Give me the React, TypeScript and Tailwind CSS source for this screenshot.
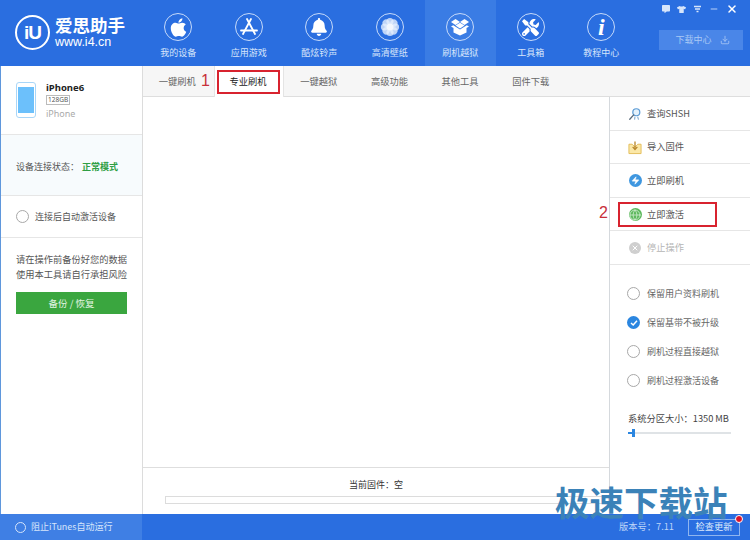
import { FaApple, FaBell, FaTools, FaTshirt, FaCommentAlt } from 'react-icons/fa';
import { FiDownload, FiMinus, FiX } from 'react-icons/fi';
import { Zap, Globe, X } from 'lucide-react';
import type { ReactNode } from 'react';

function Flower() {
  const petals = [0, 45, 90, 135, 180, 225, 270, 315];
  return (
    <svg width="22" height="22" viewBox="0 0 22 22">
      {petals.map((a) => (
        <circle key={a} cx="11" cy="5.5" r="3.6" fill="#e3edfc" opacity="0.8" transform={`rotate(${a} 11 11)`} />
      ))}
      <circle cx="11" cy="11" r="3.5" fill="#f4f8fe" />
    </svg>
  );
}

function AppStoreA() {
  return (
    <svg width="22" height="22" viewBox="0 0 22 22" fill="none" stroke="#fff" strokeWidth="1.8" strokeLinecap="round">
      <path d="M13 3 L5 18" />
      <path d="M9 3 L17 18" />
      <path d="M3 14.5 H19" />
    </svg>
  );
}

function OpenBox() {
  return (
    <svg width="20" height="20" viewBox="0 0 20 20" fill="#fff">
      <path d="M5.5 2 L10 5 L5.5 8 L1 5 Z" />
      <path d="M14.5 2 L19 5 L14.5 8 L10 5 Z" />
      <path d="M5.5 8.6 L10 5.8 L14.5 8.6 L10 11.4 Z" />
      <path d="M1 9.5 L3.2 8.2 L10 12.6 L16.8 8.2 L19 9.5 L16.5 11 V15.5 L10 18.5 L3.5 15.5 V11 Z" />
    </svg>
  );
}

function SearchBadge() {
  return (
    <svg width="16" height="16" viewBox="0 0 16 16" fill="none">
      <circle cx="9.5" cy="6" r="4" fill="#e4f1fb" stroke="#5b9bd5" strokeWidth="1.4" />
      <path d="M6.5 9 L2 14" stroke="#5a6b7c" strokeWidth="1.5" strokeLinecap="round" />
      <path d="M8 11 L7.5 14.5 M11 11 L12 14.5" stroke="#7fa8cf" strokeWidth="1.2" />
    </svg>
  );
}

function ImportBox() {
  return (
    <svg width="15" height="15" viewBox="0 0 15 15" fill="none">
      <path d="M1 4 H4.5 L7.5 7 L10.5 4 H14 V14 H1 Z" fill="#fbe8a8" stroke="#e3bb57" strokeWidth="1" />
      <path d="M7.5 1 V9" stroke="#b8862a" strokeWidth="1.4" />
      <path d="M5 6.8 L7.5 9.6 L10 6.8" stroke="#b8862a" strokeWidth="1.4" />
    </svg>
  );
}

const navItems: { label: string; icon: ReactNode; active?: boolean }[] = [
  { label: '我的设备', icon: <FaApple className="text-[21px] text-white" /> },
  { label: '应用游戏', icon: <AppStoreA /> },
  { label: '酷炫铃声', icon: <FaBell className="text-[18px] text-white" /> },
  { label: '高清壁纸', icon: <Flower /> },
  { label: '刷机越狱', icon: <OpenBox />, active: true },
  { label: '工具箱', icon: <FaTools className="text-[17px] text-white" /> },
  {
    label: '教程中心',
    icon: <span className="font-['Liberation_Serif',serif] text-[24px] font-bold italic leading-none text-white">i</span>,
  },
];

const tabs = ['一键刷机', '专业刷机', '一键越狱', '高级功能', '其他工具', '固件下载'];

const actions: { label: string; icon: ReactNode; muted?: boolean }[] = [
  { label: '查询SHSH', icon: <SearchBadge /> },
  { label: '导入固件', icon: <ImportBox /> },
  {
    label: '立即刷机',
    icon: (
      <span className="flex h-[13px] w-[13px] items-center justify-center rounded-full bg-[#3f97e0]">
        <Zap className="h-[9px] w-[9px] fill-white text-white" strokeWidth={1} />
      </span>
    ),
  },
  {
    label: '立即激活',
    icon: (
      <span className="flex h-[13px] w-[13px] items-center justify-center rounded-full bg-[#5cb85c]">
        <Globe className="h-[12px] w-[12px] text-[#d8f0d8]" strokeWidth={1.5} />
      </span>
    ),
  },
  {
    label: '停止操作',
    muted: true,
    icon: (
      <span className="flex h-[12px] w-[12px] items-center justify-center rounded-full bg-[#cfcfcf]">
        <X className="h-[8px] w-[8px] text-white" strokeWidth={3} />
      </span>
    ),
  },
];

const options = [
  { label: '保留用户资料刷机', checked: false },
  { label: '保留基带不被升级', checked: true },
  { label: '刷机过程直接越狱', checked: false },
  { label: '刷机过程激活设备', checked: false },
];

function Radio({ checked }: { checked?: boolean }) {
  if (checked) {
    return (
      <span className="flex h-[13px] w-[13px] shrink-0 items-center justify-center rounded-full bg-[#2b86e0]">
        <svg width="8" height="8" viewBox="0 0 8 8" fill="none" stroke="#fff" strokeWidth="1.5">
          <path d="M1 4 L3.2 6 L7 1.8" />
        </svg>
      </span>
    );
  }
  return <span className="h-[13px] w-[13px] shrink-0 rounded-full border border-[#a8a8a8] bg-white" />;
}

export default function App() {
  return (
    <div className="relative flex h-[540px] w-[750px] flex-col overflow-hidden bg-white font-['Noto_Sans_CJK_SC','Noto_Sans',sans-serif] text-[9px] text-[#555]">
      {/* top bar */}
      <header className="flex h-[66px] shrink-0 bg-[#2a6ee0]">
        <div className="flex w-[143px] shrink-0 items-center gap-[5px] pb-[2px] pl-[15px]">
          <div className="flex h-[35px] w-[35px] shrink-0 items-center justify-center rounded-full border-[2px] border-white font-['Liberation_Sans',sans-serif] text-[19px] font-bold leading-none tracking-[-1px] text-white">
            iU
          </div>
          <div className="text-white">
            <div className="text-[17.5px] font-bold leading-[18px]">爱思助手</div>
            <div className="mt-[1px] font-['Liberation_Sans',sans-serif] text-[12.5px] leading-[14px]">www.i4.cn</div>
          </div>
        </div>
        <nav className="flex">
          {navItems.map((item) => (
            <div
              key={item.label}
              className={`flex w-[70.5px] flex-col items-center pt-[13px] ${item.active ? 'bg-[#3a7ce4]' : ''}`}
            >
              <div className="flex h-[28px] w-[28px] items-center justify-center rounded-full border border-[#c6dafa]">
                {item.icon}
              </div>
              <div className="mt-[4px] text-[9px] leading-[16px] text-[#d6e5fb]">{item.label}</div>
            </div>
          ))}
        </nav>
        <div className="flex flex-1 flex-col items-end pr-[7px] pt-[2px]">
          <div className="flex h-[14px] items-center gap-[7px] pr-[5px] text-[#d6e5fb]">
            <FaCommentAlt className="text-[8px]" />
            <FaTshirt className="text-[9px]" />
            <svg width="9" height="8" viewBox="0 0 9 8" fill="none" stroke="currentColor" strokeWidth="1.3">
              <path d="M1 1.5 H8 M2 4 H7 M3.5 6.5 H5.5" />
            </svg>
            <FiMinus className="text-[10px]" />
            <FiX className="text-[12px] text-white" strokeWidth={3} />
          </div>
          <div className="mt-[14px] flex h-[20px] w-[84px] items-center justify-center gap-[8px] bg-[#4a86e8] pl-[3px] text-[9px] text-[#a9c8f5]">
            下载中心
            <FiDownload className="text-[10px]" />
          </div>
        </div>
      </header>

      <div className="flex min-h-0 flex-1">
        {/* left column */}
        <aside className="flex w-[143px] shrink-0 flex-col border-l border-r border-l-[#5f97dc] border-r-[#dcdcdc]">
          <div className="flex h-[69px] shrink-0 items-center gap-[10px] border-b border-[#e6e6e6] pl-[15px]">
            <div className="flex h-[36px] w-[20px] flex-col rounded-[3px] border border-[#a9d6f8] bg-white px-[1px] py-[4px]">
              <div className="flex-1 bg-[#6cc0fb]" />
            </div>
            <div>
              <div className="font-['Noto_Sans',sans-serif] text-[9.5px] font-bold leading-[13px] text-[#222]">iPhone6</div>
              <div className="mt-[1px] w-fit border border-[#bbb] px-[1px] font-['Noto_Sans',sans-serif] text-[6.5px] leading-[8px] text-[#555]">
                128GB
              </div>
              <div className="mt-[3px] font-['Noto_Sans',sans-serif] text-[9px] leading-[12px] text-[#aaa]">iPhone</div>
            </div>
          </div>
          <div className="flex h-[61px] shrink-0 items-center gap-[3px] border-b border-[#e6e6e6] bg-[#f7fbfd] pl-[15px] pt-[3px]">
            <span>设备连接状态：</span>
            <span className="font-bold text-[#2f9e44]">正常模式</span>
          </div>
          <div className="flex h-[42px] shrink-0 items-center gap-[6px] border-b border-[#e6e6e6] pl-[15px]">
            <Radio />
            <span>连接后自动激活设备</span>
          </div>
          <div className="pl-[15px] pt-[14px] text-[9.25px] leading-[14.5px]">
            <p>请在操作前备份好您的数据</p>
            <p>使用本工具请自行承担风险</p>
          </div>
          <button className="ml-[15px] mt-[11px] h-[22px] w-[111px] bg-[#3aa63f] text-[9.5px] text-[#e2f4e2]">备份 / 恢复</button>
        </aside>

        {/* main */}
        <main className="flex min-w-0 flex-1 flex-col">
          <div className="flex h-[31px] shrink-0 border-b border-[#dedede] bg-[#f6f6f6]">
            {tabs.map((tab, i) => (
              <div
                key={tab}
                className={`flex h-[31px] w-[70.7px] items-center justify-center pr-[2px] text-[9.25px] ${
                  i === 1 ? 'border-x border-[#e4e4e4] bg-white text-[#222]' : 'text-[#666]'
                }`}
              >
                {tab}
              </div>
            ))}
          </div>
          <div className="flex min-h-0 flex-1">
            <section className="flex min-w-0 flex-1 flex-col">
              <div className="flex-1" />
              <div className="flex h-[47px] shrink-0 flex-col border-t border-[#dedede] pt-[10px]">
                <div className="text-center text-[9px] leading-[14px] text-[#333]">当前固件：空</div>
                <div className="ml-[22px] mt-[4px] h-[8px] border border-[#dcdcdc]" />
              </div>
            </section>

            {/* right column */}
            <aside className="flex w-[141px] shrink-0 flex-col border-l border-[#d5d9dd]">
              {actions.map((a) => (
                <div
                  key={a.label}
                  className={`flex h-[33.6px] shrink-0 items-center gap-[5px] border-b border-[#e6e6e6] pl-[18px] pt-[1px] ${a.muted ? 'text-[#b5b5b5]' : ''}`}
                >
                  <span className="flex w-[14px] justify-center">{a.icon}</span>
                  <span className="text-[9.25px]">{a.label}</span>
                </div>
              ))}
              <div className="flex flex-col gap-[15px] pl-[17px] pt-[22px]">
                {options.map((o) => (
                  <div key={o.label} className="flex h-[14px] items-center gap-[7px] text-[#666]">
                    <Radio checked={o.checked} />
                    <span>{o.label}</span>
                  </div>
                ))}
              </div>
              <div className="pl-[18px] pt-[23px]">
                <div className="text-[9.25px] leading-[14px] text-[#444]">系统分区大小：1350 MB</div>
                <div className="relative mt-[7px] h-[2px] w-[103px] bg-[#dfe3e6]">
                  <div className="h-[2px] w-[6px] bg-[#2b86e0]" />
                  <div className="absolute left-[4px] top-[-3px] h-[8px] w-[3px] bg-[#2b86e0]" />
                </div>
              </div>
            </aside>
          </div>
        </main>
      </div>

      {/* bottom bar */}
      <footer className="flex h-[26px] shrink-0 items-center bg-[#2a6ee0]">
        <div className="flex h-full w-[142px] items-center gap-[5px] bg-[#3f7fe4] pl-[15px] text-[#d6e5fb]">
          <span className="h-[11px] w-[11px] rounded-full border border-[#d6e5fb]" />
          <span className="text-[9px]">阻止iTunes自动运行</span>
        </div>
        <div className="ml-auto flex items-center gap-[14px] pr-[10px] text-[9.25px] text-[#bcd4f8]">
          <span>版本号：7.11</span>
          <div className="relative flex h-[17px] w-[52px] items-center justify-center border border-[#8fb5ef] text-[#dbe8fb]">
            检查更新
            <span className="absolute right-[-4px] top-[-5px] h-[8px] w-[8px] rounded-full border border-white bg-[#d9142b]" />
          </div>
        </div>
      </footer>

      {/* red annotations */}
      <div className="absolute left-[217px] top-[70px] h-[24px] w-[63px] border-2 border-[#d8232f]" />
      <div className="absolute left-[201px] top-[71px] font-['Liberation_Sans',sans-serif] text-[16px] leading-[20px] text-[#c8303a]">1</div>
      <div className="absolute left-[618px] top-[202px] h-[25px] w-[99px] border-2 border-[#d8232f]" />
      <div className="absolute left-[599px] top-[203px] font-['Liberation_Sans',sans-serif] text-[16px] leading-[20px] text-[#c8303a]">2</div>

      {/* watermark */}
      <div className="absolute left-[555px] top-[483px] text-[34.5px] font-bold leading-[37px] text-[#3b82b8]">极速下载站</div>
    </div>
  );
}
